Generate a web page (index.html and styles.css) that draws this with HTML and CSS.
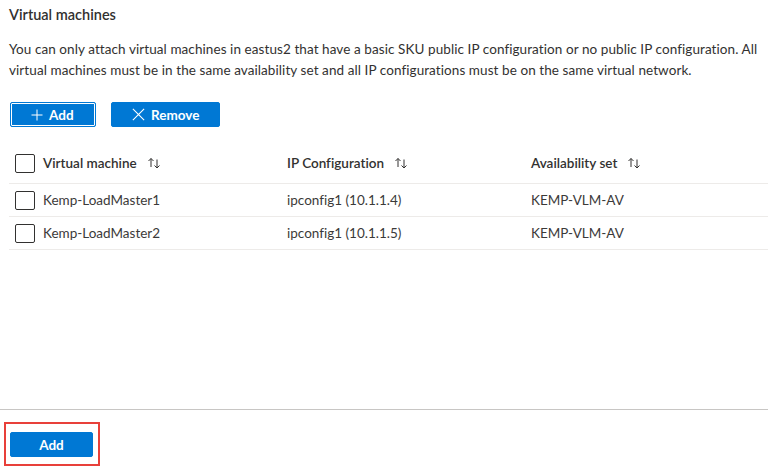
FILE: index.html
```html
<!DOCTYPE html>
<html>
<head>
<meta charset="utf-8">
<link rel="stylesheet" href="styles.css">
</head>
<body>
<div class="page">
  <div class="main">
    <h2 class="title">Virtual machines</h2>
    <p class="desc">You can only attach virtual machines in eastus2 that have a basic SKU public IP configuration or no public IP configuration. All virtual machines must be in the same availability set and all IP configurations must be on the same virtual network.</p>
    <div class="toolbar">
      <button class="btn btn-focus">
        <svg class="ico" viewBox="0 0 12 12" width="12" height="12"><path d="M6 0.5V11.5M0.5 6H11.5" stroke="#fff" stroke-width="1" fill="none"/></svg>
        <span>Add</span>
      </button>
      <button class="btn">
        <svg class="ico" viewBox="0 0 12 12" width="13" height="13"><path d="M0.8 0.8L11.2 11.2M11.2 0.8L0.8 11.2" stroke="#fff" stroke-width="1" fill="none"/></svg>
        <span>Remove</span>
      </button>
    </div>
    <div class="grid">
      <div class="row head">
        <span class="cb"></span>
        <span class="cell">Virtual machine <svg class="sort" viewBox="0 0 14 12" width="14" height="12"><path d="M4 10V1.5M1.5 4L4 1.5L6.5 4M10 2.5V11M7.5 8.5L10 11L12.5 8.5" stroke="#323130" stroke-width="1" fill="none"/></svg></span>
        <span class="cell">IP Configuration <svg class="sort" viewBox="0 0 14 12" width="14" height="12"><path d="M4 10V1.5M1.5 4L4 1.5L6.5 4M10 2.5V11M7.5 8.5L10 11L12.5 8.5" stroke="#323130" stroke-width="1" fill="none"/></svg></span>
        <span class="cell">Availability set <svg class="sort" viewBox="0 0 14 12" width="14" height="12"><path d="M4 10V1.5M1.5 4L4 1.5L6.5 4M10 2.5V11M7.5 8.5L10 11L12.5 8.5" stroke="#323130" stroke-width="1" fill="none"/></svg></span>
      </div>
      <div class="row">
        <span class="cb"></span>
        <span class="cell">Kemp-LoadMaster1</span>
        <span class="cell">ipconfig1 (10.1.1.4)</span>
        <span class="cell">KEMP-VLM-AV</span>
      </div>
      <div class="row">
        <span class="cb"></span>
        <span class="cell">Kemp-LoadMaster2</span>
        <span class="cell">ipconfig1 (10.1.1.5)</span>
        <span class="cell">KEMP-VLM-AV</span>
      </div>
    </div>
  </div>
  <div class="footer">
    <div class="highlight">
      <button class="btn btn-primary">Add</button>
    </div>
  </div>
</div>
</body>
</html>
```

FILE: styles.css
```css
* { box-sizing: border-box; }
html, body { margin: 0; padding: 0; background: #fff; }
body {
  font-family: "Lato", "Open Sans", sans-serif;
  font-size: 13.5px;
  color: #323130;
  font-variant-ligatures: none;
}
.page {
  height: 472px;
  display: flex;
  flex-direction: column;
}
.main {
  flex: 1;
  padding: 5px 0 0 9px;
}
.title {
  margin: 0;
  font-size: 14.5px;
  font-weight: 600;
  line-height: 20px;
}
.desc {
  margin: 14px 8px 0 0;
  line-height: 21px;
  letter-spacing: 0.08px;
}
.toolbar {
  display: flex;
  gap: 15px;
  margin-top: 21px;
  padding-left: 1px;
}
.btn {
  font-family: inherit;
  font-variant-ligatures: none;
  background: #0078d4;
  color: #fff;
  border: 1px solid #0078d4;
  border-radius: 2px;
  height: 25px;
  padding: 0 20px;
  display: inline-flex;
  align-items: center;
  gap: 6px;
  font-weight: 700;
  font-size: 13.5px;
}
.btn-focus {
  width: 86px;
  padding-left: 20px;
  box-shadow: inset 0 0 0 1px #fff;
}
.ico { display: block; }
.grid { margin-top: 16px; }
.row {
  display: grid;
  grid-template-columns: 28px 244px 244px 1fr;
  align-items: center;
  height: 33px;
  padding-left: 6px;
  border-bottom: 1px solid #edebe9;
  color: #3b3a39;
}
.row.head {
  height: 41px;
  font-weight: 600;
  color: #323130;
}
.cb {
  width: 20px;
  height: 19px;
  border: 1px solid #323130;
  border-radius: 2px;
}
.cell { display: flex; align-items: center; white-space: nowrap; }
.sort { margin-left: 10px; }
.footer {
  height: 63px;
  border-top: 1px solid #c8c6c4;
  padding: 12px 0 0 4px;
}
.highlight {
  display: inline-block;
  border: 2px solid #e8403a;
  padding: 8px 5px 7px 4px;
}
.btn-primary {
  width: 83px;
  justify-content: center;
  padding: 0;
}
```
